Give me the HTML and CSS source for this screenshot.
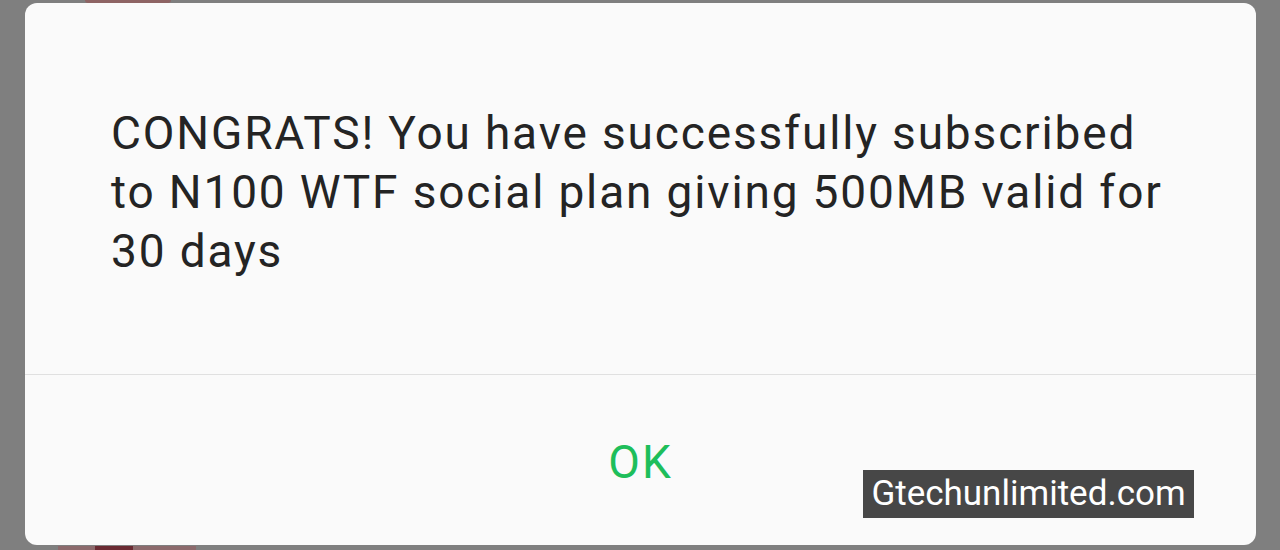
FILE: index.html
```html
<!DOCTYPE html>
<html lang="en">
<head>
    <meta charset="UTF-8">
    <title>Subscription</title>
    <link rel="stylesheet" href="styles.css">
</head>
<body>
    <div class="behind">
        <span class="blob top-blob"></span>
        <span class="blob bottom-blob"><span class="blob-core"></span></span>
    </div>
    <div class="dialog">
        <div class="message">
            <p>CONGRATS! You have successfully subscribed to N100 WTF social plan giving 500MB valid for 30 days</p>
        </div>
        <div class="actions">
            <button class="ok">OK</button>
        </div>
    </div>
    <div class="watermark">Gtechunlimited.com</div>
</body>
</html>
```
FILE: styles.css
```css
body {
    margin: 0;
    width: 1280px;
    height: 550px;
    overflow: hidden;
    background-color: #7f7f7f;
    font-family: Roboto, "Noto Sans", sans-serif;
    position: relative;
}
.behind .blob {
    position: absolute;
    display: block;
}
.top-blob {
    left: 85px;
    top: 0;
    width: 86px;
    height: 3px;
    background-color: #8e6464;
    border-radius: 0 0 30px 30px;
}
.bottom-blob {
    left: 58px;
    top: 546px;
    width: 138px;
    height: 4px;
    background-color: #8c6a6c;
}
.blob-core {
    display: block;
    margin-left: 37px;
    width: 38px;
    height: 4px;
    background-color: #6a2a32;
}
.dialog {
    position: relative;
    margin: 3px 0 0 25px;
    width: 1231px;
    height: 542px;
    background-color: #fafafa;
    border-radius: 12px;
    display: flex;
    flex-direction: column;
}
.message {
    height: 372px;
    border-bottom: 1px solid #e0e0e0;
    box-sizing: border-box;
    padding: 101px 84px 0 86px;
}
.message p {
    margin: 0;
    font-size: 46px;
    line-height: 59px;
    letter-spacing: 1.85px;
    color: #242424;
}
.actions {
    flex: 1;
    display: flex;
    align-items: center;
    justify-content: center;
}
.ok {
    border: none;
    background: none;
    font-family: inherit;
    font-size: 46px;
    letter-spacing: 2px;
    color: #1ebe5b;
    padding: 0;
    margin-top: 4px;
}
.watermark {
    position: absolute;
    left: 863px;
    top: 470px;
    width: 331px;
    height: 48px;
    box-sizing: border-box;
    background-color: #474747;
    color: #fff;
    font-size: 35px;
    line-height: 48px;
    text-align: center;
}
```
